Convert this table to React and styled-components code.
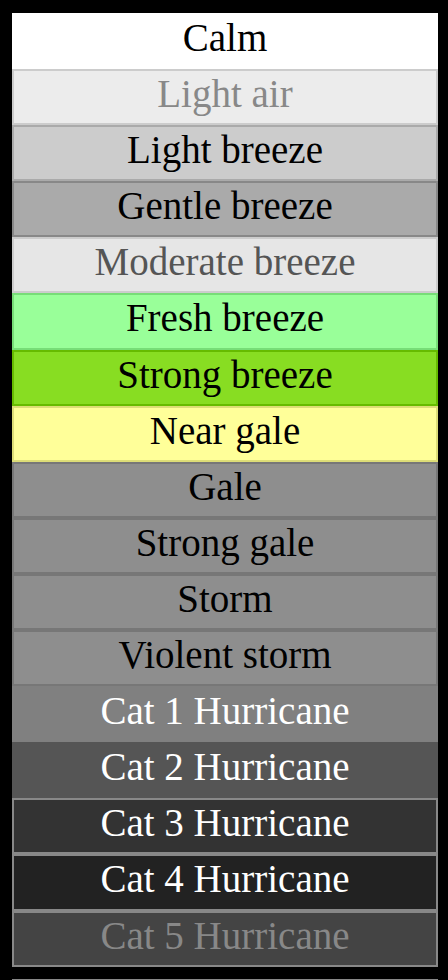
import React from "react";
import styled, { createGlobalStyle } from "styled-components";

const GlobalStyle = createGlobalStyle`
  html, body {
    margin: 0;
    padding: 0;
    background: #000;
  }
  body {
    font-family: "Liberation Serif", "Times New Roman", serif;
  }
`;

const Page = styled.div`
  padding: 13px 10px 0 12px;
  width: 426px;
  height: 980px;
  overflow: hidden;
`;

const Scale = styled.ul`
  list-style: none;
  margin: 0;
  padding: 0;
  display: flex;
  flex-direction: column;
`;

const Level = styled.li`
  box-sizing: border-box;
  padding: 1px 0 7px;
  border: 2px solid ${(p) => p.$border};
  background: ${(p) => p.$bg};
  color: ${(p) => p.$fg};
  font-size: 39px;
  line-height: 44.1px;
  text-align: center;
  white-space: nowrap;
`;

const NextGroup = styled.div`
  margin-top: 12px;
  height: 40px;
  border-top: 2px solid #888;
  background: #444;
`;

const levels = [
  { name: "Calm", bg: "#ffffff", border: "#ffffff", fg: "#000" },
  { name: "Light air", bg: "#ececec", border: "#cccccc", fg: "#888" },
  { name: "Light breeze", bg: "#cccccc", border: "#aaaaaa", fg: "#000" },
  { name: "Gentle breeze", bg: "#aaaaaa", border: "#888888", fg: "#000" },
  { name: "Moderate breeze", bg: "#e6e6e6", border: "#cccccc", fg: "#555" },
  { name: "Fresh breeze", bg: "#99ff99", border: "#77dd77", fg: "#000" },
  { name: "Strong breeze", bg: "#88dd22", border: "#66bb00", fg: "#000" },
  { name: "Near gale", bg: "#ffff99", border: "#dddd77", fg: "#000" },
  { name: "Gale", bg: "#8e8e8e", border: "#777777", fg: "#000" },
  { name: "Strong gale", bg: "#8e8e8e", border: "#777777", fg: "#000" },
  { name: "Storm", bg: "#8e8e8e", border: "#777777", fg: "#000" },
  { name: "Violent storm", bg: "#8e8e8e", border: "#777777", fg: "#000" },
  { name: "Cat 1 Hurricane", bg: "#808080", border: "#808080", fg: "#fff" },
  { name: "Cat 2 Hurricane", bg: "#555555", border: "#555555", fg: "#fff" },
  { name: "Cat 3 Hurricane", bg: "#333333", border: "#888888", fg: "#fff" },
  { name: "Cat 4 Hurricane", bg: "#222222", border: "#888888", fg: "#fff" },
  { name: "Cat 5 Hurricane", bg: "#444444", border: "#888888", fg: "#888" },
];

export default function App() {
  return (
    <>
      <GlobalStyle />
      <Page>
        <Scale>
          {levels.map((l) => (
            <Level key={l.name} $bg={l.bg} $border={l.border} $fg={l.fg}>
              {l.name}
            </Level>
          ))}
        </Scale>
        <NextGroup />
      </Page>
    </>
  );
}
